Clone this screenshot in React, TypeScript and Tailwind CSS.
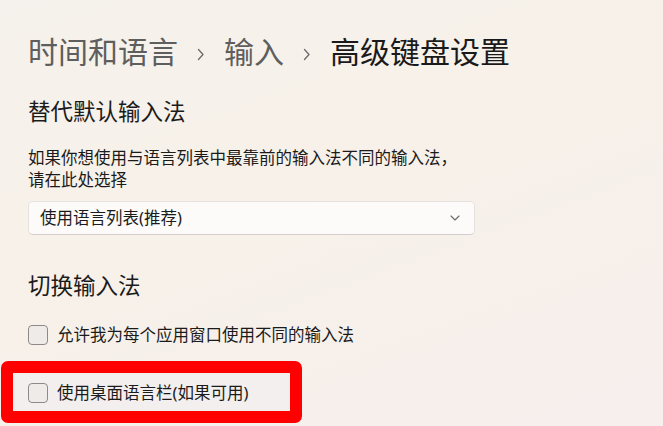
import React from "react";

const font = {
  fontFamily: '"Noto Sans", "Noto Sans CJK SC", sans-serif',
};

function Chevron() {
  return (
    <svg width="8" height="13" viewBox="0 0 8 13" className="mx-[19px] mt-[4px]">
      <path d="M1.5 1.5 L6 6.5 L1.5 11.5" fill="none" stroke="#6b6b6b" strokeWidth="1.3" strokeLinecap="round" strokeLinejoin="round" />
    </svg>
  );
}

function Checkbox() {
  return (
    <div className="w-[20px] h-[20px] rounded-[4px] border border-[#8d8a89] bg-[#efebe9] shrink-0" />
  );
}

export default function App() {
  return (
    <div
      className="relative w-[663px] h-[426px] overflow-hidden bg-[linear-gradient(160deg,#f5f1ec_0%,#f7f1e9_40%,#f6efed_100%)] text-[#1b1b1b]"
      style={font}
    >
      <div className="pl-[28px] pt-[32px] flex flex-col">
        <div className="flex items-center h-[40px] text-[30px] leading-[40px]">
          <span className="text-[#5e5e5e]">时间和语言</span>
          <Chevron />
          <span className="text-[#5e5e5e]">输入</span>
          <Chevron />
          <span className="text-[#1a1a1a]">高级键盘设置</span>
        </div>

        <div className="mt-[25px] h-[30px] text-[22.5px] leading-[30px]">替代默认输入法</div>

        <div className="mt-[20px] text-[16.5px] leading-[22px]">
          <div>如果你想使用与语言列表中最靠前的输入法不同的输入法，</div>
          <div>请在此处选择</div>
        </div>

        <div className="mt-[10px] w-[447px] h-[34px] rounded-[5px] border border-[#e6e1de] border-b-[#d3cecb] bg-[#fcfbfa] flex items-center pl-[11px] pr-[14px]">
          <span className="text-[16.5px] leading-[22px] flex-1">使用语言列表(推荐)</span>
          <svg width="10" height="6" viewBox="0 0 10 6">
            <path d="M1 1 L5 5 L9 1" fill="none" stroke="#6a6a6a" strokeWidth="1.1" strokeLinecap="round" strokeLinejoin="round" />
          </svg>
        </div>

        <div className="mt-[36px] h-[30px] text-[22.5px] leading-[30px]">切换输入法</div>

        <div className="mt-[14px] h-[40px] flex items-center gap-[9px] text-[16.5px] leading-[22px]">
          <Checkbox />
          <span>允许我为每个应用窗口使用不同的输入法</span>
        </div>

        <div className="mt-[18px] ml-[-15px] pl-[15px] w-[278px] h-[40px] bg-[#f3efee] flex items-center gap-[9px] text-[16.5px] leading-[22px]">
          <Checkbox />
          <span>使用桌面语言栏(如果可用)</span>
        </div>
      </div>

      <div className="absolute left-[1px] top-[361px] w-[301px] h-[62px] border-[12px] border-[#ff0000] rounded-[7px]" />
    </div>
  );
}
